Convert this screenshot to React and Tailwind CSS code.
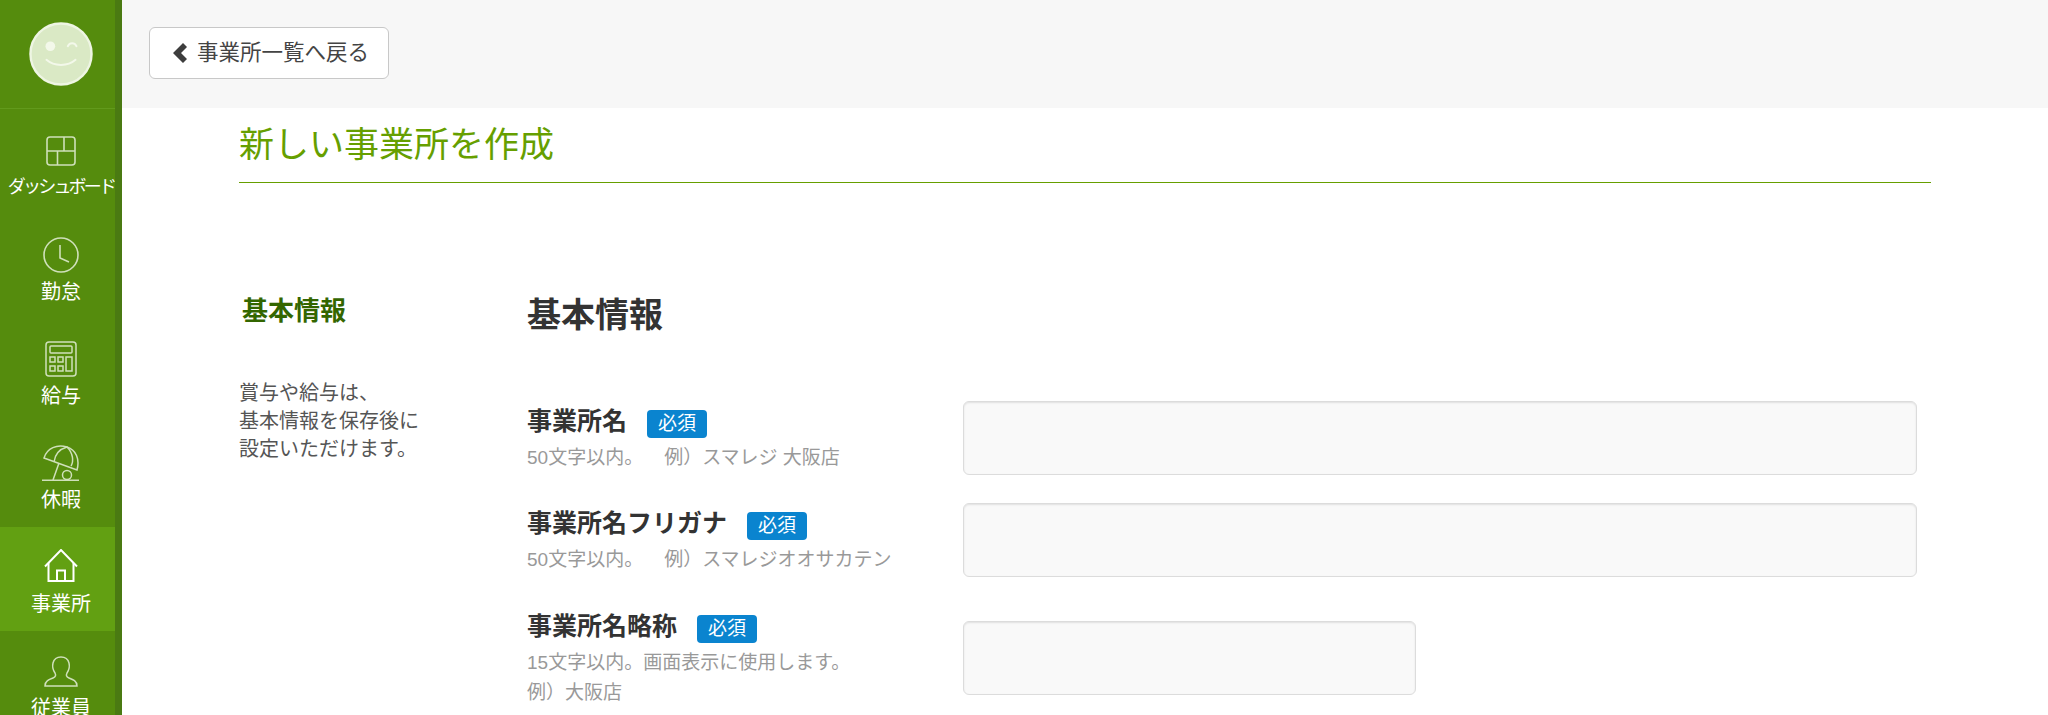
import React from 'react';

const IconDashboard = () => (
  <svg width="30" height="30" viewBox="0 0 30 30" fill="none" stroke="currentColor" strokeWidth="1.6">
    <rect x="1" y="1" width="28" height="28" rx="3" />
    <path d="M18 1v14M1 15h28M11.500 15v14" />
  </svg>
);

const IconClock = () => (
  <svg width="36" height="36" viewBox="0 0 36 36" fill="none" stroke="currentColor" strokeWidth="1.6">
    <circle cx="18" cy="18" r="17" />
    <path d="M17 8v13l9 4" />
  </svg>
);

const IconCalc = () => (
  <svg width="32" height="36" viewBox="0 0 32 36" fill="none" stroke="currentColor" strokeWidth="1.5">
    <rect x="1" y="1" width="30" height="34" rx="3" />
    <rect x="5" y="5" width="22" height="7" rx="1" />
    <rect x="5" y="16" width="5" height="5" />
    <rect x="13" y="16" width="5" height="5" />
    <rect x="5" y="25" width="5" height="5" />
    <rect x="13" y="25" width="5" height="5" />
    <rect x="21" y="16" width="6" height="14" />
  </svg>
);

const IconUmbrella = () => (
  <svg width="38" height="36" viewBox="0 0 38 36" fill="none" stroke="currentColor" strokeWidth="1.5">
    <path d="M2 13C5 3 15-1 25 2c9 3 13 12 10 23L2 13Z" />
    <path d="M12 17C13 9 18 4 25 2c6 6 7 14 4 19M17 18l-6 17" />
    <circle cx="25" cy="30" r="4.500" />
    <path d="M0 35.200h37" />
  </svg>
);

const IconHome = () => (
  <svg width="34" height="33" viewBox="0 0 34 33" fill="none" stroke="currentColor" strokeWidth="2" className="-mt-[3px]">
    <path d="M1 17.500 17 1l16 16.500" />
    <path d="M4.500 14v18h25V14M13 32V21.500h8V32" />
  </svg>
);

const IconUser = () => (
  <svg width="34" height="31" viewBox="0 0 34 31" fill="none" stroke="currentColor" strokeWidth="1.5">
    <path d="M1 30c0-5 4-6.500 8-8 3-1.200 3-3 2-5-2-3-3-6-2-10 1-4 4-6 8-6s7 2 8 6c1 4 0 7-2 10-1 2-1 3.800 2 5 4 1.500 8 3 8 8H1Z" />
  </svg>
);

const navItems = [
  { label: 'ダッシュボード', icon: <IconDashboard />, tight: true },
  { label: '勤怠', icon: <IconClock /> },
  { label: '給与', icon: <IconCalc /> },
  { label: '休暇', icon: <IconUmbrella /> },
  { label: '事業所', icon: <IconHome />, active: true },
  { label: '従業員', icon: <IconUser /> },
];

const Sidebar = () => (
  <div className="w-[122px] h-full shrink-0 flex flex-col bg-[#558c0d] border-r-[7px] border-[#4a7a12] overflow-hidden">
    <div className="h-[109px] shrink-0 pl-[7px] flex items-center justify-center border-b border-[#629a1c]">
      <svg width="64" height="64" viewBox="0 0 66 66">
        <circle cx="33" cy="33" r="31.500" fill="#dae9c5" stroke="#eef5e3" strokeWidth="2.500" />
        <circle cx="22" cy="25" r="5" fill="#f3f8ea" />
        <path d="M40 25c2-4 7-4 9 0" fill="none" stroke="#f3f8ea" strokeWidth="2" strokeLinecap="round" />
        <path d="M18 39c8 7 22 7 30 0" fill="none" stroke="#f3f8ea" strokeWidth="2" strokeLinecap="round" />
      </svg>
    </div>
    <div className="pt-[2px] flex flex-col">
      {navItems.map((item) => (
        <div
          key={item.label}
          className={`h-[104px] shrink-0 pl-[7px] flex flex-col items-center ${item.active ? 'bg-[#62a012] text-white' : 'text-[#cfe0ba]'}`}
        >
          <div className="h-[44px] mt-[18px] flex items-center justify-center">{item.icon}</div>
          <div className={`text-white whitespace-nowrap ${item.tight ? 'text-[18px] leading-[28px] tracking-[-2.800px]' : 'text-[20px] leading-[30px]'}`}>
            {item.label}
          </div>
        </div>
      ))}
    </div>
  </div>
);

const Field = ({ name, hint, example, hint2, short, className }) => (
  <div className={`flex items-center ${className || ''}`}>
    <div className="w-[436px] shrink-0 pt-[4px]">
      <div className="flex items-center h-[34px] -mt-[3px]">
        <span className="text-[25px] font-bold leading-[34px] text-[#333333]">{name}</span>
        <span className="ml-[20px] mt-[5px] w-[60px] h-[28px] rounded-[4px] bg-[#0a84cf] text-white text-[19px] leading-[28px] text-center">必須</span>
      </div>
      <div className="mt-[5px] text-[19px] leading-[30px] text-[#999999] whitespace-nowrap">
        {hint}
        {example && <span className="ml-[21px]">{example}</span>}
      </div>
      {hint2 && <div className="text-[19px] leading-[30px] text-[#999999]">{hint2}</div>}
    </div>
    <div className={`h-[74px] rounded-[6px] bg-[#f9f9f9] border border-[#dcdcdc] shadow-[inset_0_1px_2px_rgba(0,0,0,0.1)] ${short ? 'w-[453px]' : 'w-[954px]'}`} />
  </div>
);

export default function App() {
  return (
    <div
      className="flex w-[2048px] h-[715px] overflow-hidden bg-white text-[#333333]"
      style={{ fontFamily: '"Liberation Sans", "Noto Sans CJK JP", sans-serif' }}
    >
      <Sidebar />
      <div className="flex-1 min-w-0">
        <div className="h-[108px] bg-[#f7f7f7] pl-[27px] pt-[27px]">
          <div className="w-[240px] h-[52px] flex items-center pl-[22px] bg-white border border-[#c8c8c8] rounded-[6px]">
            <svg width="16" height="22" viewBox="0 0 16 22" fill="#3d3d3d">
              <path d="M11 1 1 11l10 10 4-4-6-6 6-6-4-4Z" />
            </svg>
            <span className="ml-[9px] mt-[2px] text-[21.500px] leading-none text-[#444444]">事業所一覧へ戻る</span>
          </div>
        </div>
        <div className="ml-[117px] w-[1692px]">
          <div className="h-[75px] border-b border-[#669f00] text-[35px] leading-[74px] text-[#669f00]">新しい事業所を作成</div>
          <div className="flex mt-[110px]">
            <div className="w-[288px] shrink-0">
              <div className="pl-[3px] text-[26px] font-bold leading-[36px] text-[#336600]">基本情報</div>
              <div className="mt-[50px] text-[20px] leading-[28px] text-[#555555]">
                賞与や給与は、<br />基本情報を保存後に<br />設定いただけます。
              </div>
            </div>
            <div className="flex-1">
              <div className="text-[34px] font-bold leading-[44px] text-[#333333]">基本情報</div>
              <div className="mt-[64px] flex flex-col gap-[28px]">
                <Field name="事業所名" hint="50文字以内。" example="例）スマレジ 大阪店" />
                <Field name="事業所名フリガナ" hint="50文字以内。" example="例）スマレジオオサカテン" />
                <Field className="mt-[3px]" name="事業所名略称" hint="15文字以内。画面表示に使用します。" hint2="例）大阪店" short />
              </div>
            </div>
          </div>
        </div>
      </div>
    </div>
  );
}
